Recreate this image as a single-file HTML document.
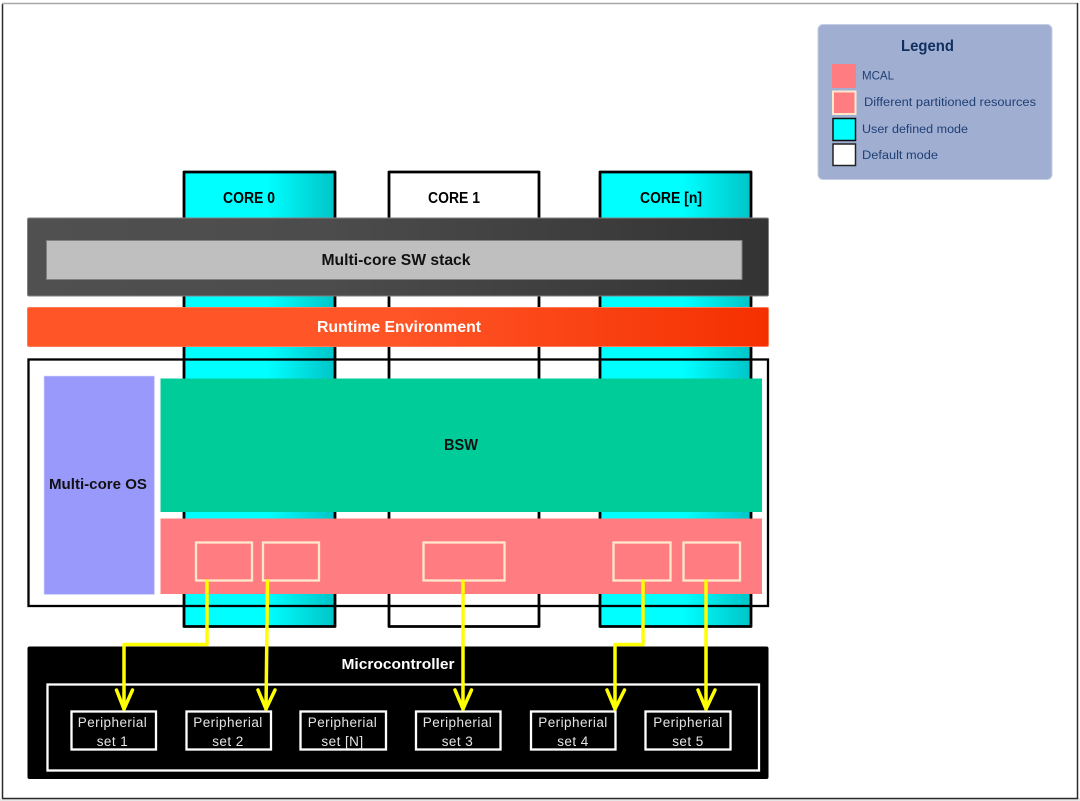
<!DOCTYPE html>
<html lang="en">
<head>
<meta charset="utf-8">
<title>Multi-core architecture</title>
<style>
html,body{margin:0;padding:0;background:#fff;width:1080px;height:801px;overflow:hidden}
svg{display:block;font-family:"Liberation Sans",sans-serif;filter:blur(.3px)}
</style>
</head>
<body>
<svg width="1080" height="801" viewBox="0 0 1080 801" xmlns="http://www.w3.org/2000/svg">
<defs>
<linearGradient id="cy" x1="0" x2="1" y1="0" y2="0">
<stop offset="0" stop-color="#00ffff"/><stop offset=".55" stop-color="#00ffff"/><stop offset="1" stop-color="#00c4c8"/>
</linearGradient>
<linearGradient id="dk" x1="0" x2="1" y1="0" y2="0">
<stop offset="0" stop-color="#505050"/><stop offset=".4" stop-color="#4c4c4c"/><stop offset="1" stop-color="#333"/>
</linearGradient>
<linearGradient id="or" x1="0" x2="1" y1="0" y2="0">
<stop offset="0" stop-color="#ff5527"/><stop offset=".5" stop-color="#ff5527"/><stop offset="1" stop-color="#f53000"/>
</linearGradient>
</defs>

<rect x="0" y="798" width="1080" height="3" fill="#e6e6e6"/>
<rect x="0" y="0" width="1080" height="3" fill="#fff"/>
<path d="M2.5 4V798" stroke="#2a2a2a" stroke-width="1.5" fill="none"/>
<path d="M2 3.5H1078" stroke="#a8a8a8" stroke-width="1.5" fill="none"/>
<path d="M1077.5 3V798.5H2" stroke="#2a2a2a" stroke-width="1.5" fill="none"/>

<rect x="184" y="172" width="151" height="454.500" fill="url(#cy)" stroke="#000" stroke-width="2.800" stroke-linejoin="round"/>
<rect x="389" y="172" width="150" height="454.500" fill="#fff" stroke="#000" stroke-width="2.800" stroke-linejoin="round"/>
<rect x="600" y="172" width="151" height="454.500" fill="url(#cy)" stroke="#000" stroke-width="2.800" stroke-linejoin="round"/>

<g font-size="15.500" font-weight="bold" fill="#000">
<text x="223" y="203" textLength="52" lengthAdjust="spacingAndGlyphs">CORE 0</text>
<text x="428" y="203" textLength="52" lengthAdjust="spacingAndGlyphs">CORE 1</text>
<text x="640" y="203" textLength="62" lengthAdjust="spacingAndGlyphs">CORE [n]</text>
</g>

<rect x="27.500" y="218" width="741" height="78" rx="1.500" fill="url(#dk)" stroke="#808080" stroke-width="1"/>
<rect x="46.500" y="240.500" width="695.500" height="39" fill="#bfbfbf" stroke="#808080" stroke-width="1"/>
<text x="321.500" y="265" font-size="15.500" font-weight="bold" fill="#111" textLength="149" lengthAdjust="spacingAndGlyphs">Multi-core SW stack</text>

<rect x="27.500" y="307.500" width="741" height="39" rx="1.500" fill="url(#or)" stroke="#ff7a55" stroke-width="1"/>
<text x="317" y="332" font-size="15.500" font-weight="bold" fill="#fff" textLength="164" lengthAdjust="spacingAndGlyphs">Runtime Environment</text>

<rect x="28.500" y="359.500" width="739.500" height="246.500" fill="none" stroke="#000" stroke-width="2.300"/>

<rect x="44" y="376" width="110.500" height="218.500" fill="#9999fb" stroke="#ddddfb" stroke-width=".6"/>
<text x="49" y="489" font-size="15" font-weight="bold" fill="#111" textLength="98" lengthAdjust="spacingAndGlyphs">Multi-core OS</text>

<rect x="160.500" y="378.500" width="601.500" height="133.500" fill="#00cc99"/>
<text x="444" y="450" font-size="15.500" font-weight="bold" fill="#111" textLength="34" lengthAdjust="spacingAndGlyphs">BSW</text>

<rect x="160.500" y="518.500" width="601.500" height="75.500" fill="#ff7c80"/>
<g fill="none" stroke="#ffe8cc" stroke-width="2.300">
<rect x="196" y="542.500" width="56" height="38"/>
<rect x="263" y="542.500" width="56" height="38"/>
<rect x="423.500" y="542.500" width="81" height="38"/>
<rect x="613.500" y="542.500" width="57" height="38"/>
<rect x="683.500" y="542.500" width="56.500" height="38"/>
</g>

<rect x="27.500" y="646.500" width="741" height="132.500" rx="2" fill="#000"/>
<text x="341.500" y="669" font-size="15" font-weight="bold" fill="#fff" textLength="113" lengthAdjust="spacingAndGlyphs">Microcontroller</text>
<rect x="47.500" y="684.500" width="711.500" height="86" fill="none" stroke="#fff" stroke-width="2.300"/>

<g fill="#000" stroke="#fff" stroke-width="2.300">
<rect x="71.500" y="711.500" width="84.500" height="38"/>
<rect x="186.500" y="711.500" width="84.500" height="38"/>
<rect x="300.500" y="711.500" width="85.500" height="38"/>
<rect x="416" y="711.500" width="84.500" height="38"/>
<rect x="531" y="711.500" width="84.500" height="38"/>
<rect x="645.500" y="711.500" width="85" height="38"/>
</g>
<g font-size="13.500" fill="#e4e4e4" text-anchor="middle" letter-spacing=".45">
<text x="112.500" y="727">Peripherial</text><text x="112.500" y="746">set 1</text>
<text x="228" y="727">Peripherial</text><text x="228" y="746">set 2</text>
<text x="342.500" y="727">Peripherial</text><text x="342.500" y="746">set [N]</text>
<text x="457.500" y="727">Peripherial</text><text x="457.500" y="746">set 3</text>
<text x="573" y="727">Peripherial</text><text x="573" y="746">set 4</text>
<text x="688" y="727">Peripherial</text><text x="688" y="746">set 5</text>
</g>

<g fill="none" stroke="#ffff00" stroke-width="3.500" stroke-linejoin="round" stroke-linecap="round">
<path d="M207 581V644.500H124V709"/>
<path d="M116.500 690L124 709L132.500 690"/>
<path d="M267.500 581L266 709"/>
<path d="M258 690L266 709L275 690"/>
<path d="M463 581V709"/>
<path d="M455 690L463 709L471.500 690"/>
<path d="M643 581V644.500H615V709"/>
<path d="M607 690L615 709L624.500 690"/>
<path d="M706 581V709"/>
<path d="M698 690L706 709L715 690"/>
</g>

<rect x="818" y="24.500" width="234" height="155" rx="5" fill="#a0aed2" stroke="#c3cde3" stroke-width="1"/>
<text x="901" y="51" font-size="15.500" font-weight="bold" fill="#10305f" textLength="53" lengthAdjust="spacingAndGlyphs">Legend</text>
<rect x="832" y="64" width="24" height="24" fill="#ff7c80"/>
<rect x="833" y="91.500" width="22.500" height="22.500" fill="#ff7c80" stroke="#ffe8cc" stroke-width="2"/>
<rect x="833" y="118.500" width="22.500" height="22" fill="#00ffff" stroke="#111" stroke-width="1.500"/>
<rect x="833" y="144" width="22.500" height="21.500" fill="#fff" stroke="#222" stroke-width="1.500"/>
<g font-size="11.500" fill="#1f3f73">
<text x="862" y="79.500" textLength="32" lengthAdjust="spacingAndGlyphs">MCAL</text>
<text x="864" y="106" textLength="172" lengthAdjust="spacingAndGlyphs">Different partitioned resources</text>
<text x="862" y="133" textLength="106" lengthAdjust="spacingAndGlyphs">User defined mode</text>
<text x="862" y="159" textLength="76" lengthAdjust="spacingAndGlyphs">Default mode</text>
</g>
</svg>
</body>
</html>
